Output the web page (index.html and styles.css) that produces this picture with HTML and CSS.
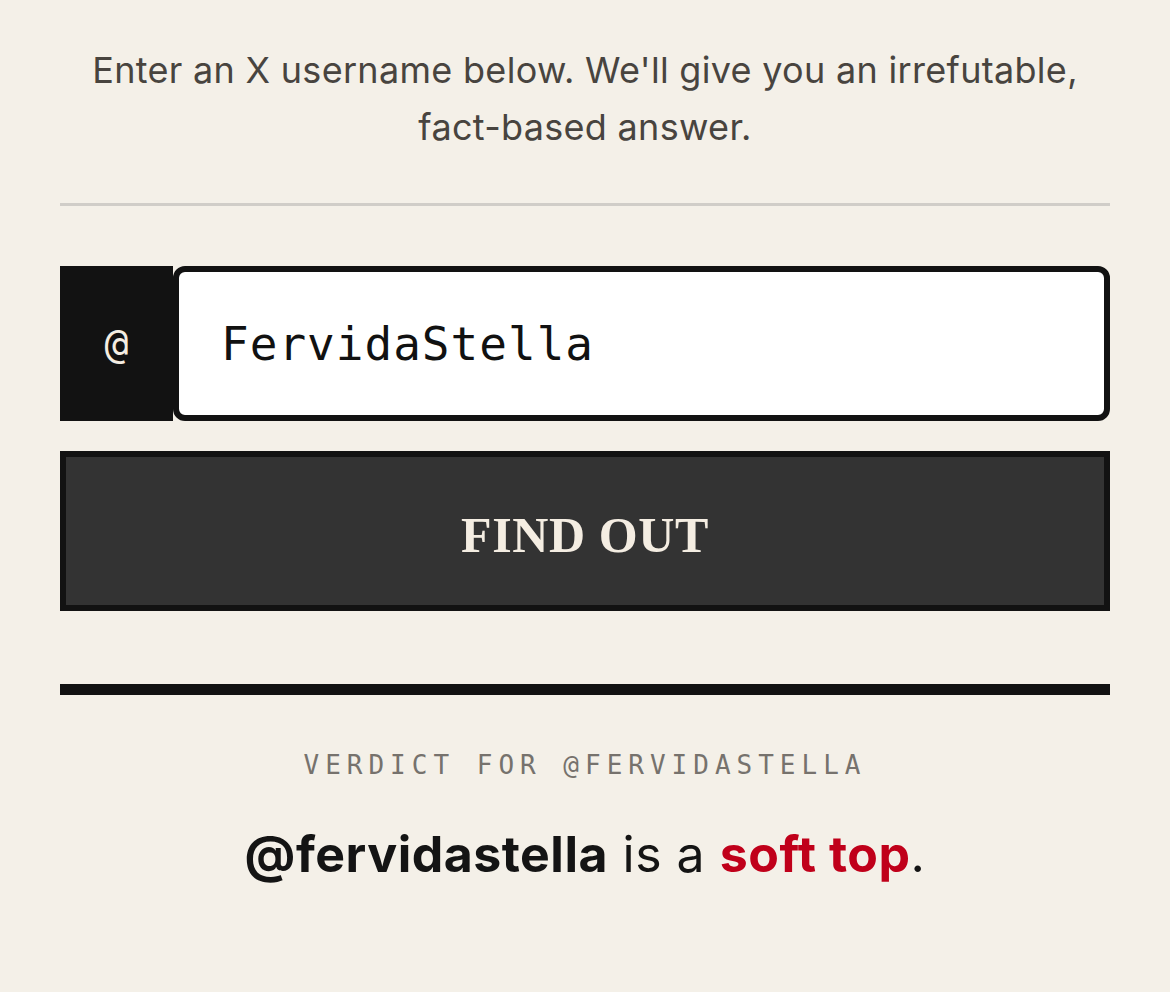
FILE: index.html
```html
<!DOCTYPE html>
<html>
<head>
<meta charset="utf-8">
<link rel="stylesheet" href="styles.css">
</head>
<body>
<main class="page">
  <p class="intro">Enter an X username below. We'll give you an irrefutable, <span class="nowrap">fact-based</span> answer.</p>
  <hr class="divider">
  <div class="input-row">
    <div class="prefix">@</div>
    <div class="field">FervidaStella</div>
  </div>
  <button class="btn">FIND OUT</button>
  <div class="rule"></div>
  <p class="label">VERDICT FOR @FERVIDASTELLA</p>
  <p class="result"><strong>@fervidastella</strong> is a <strong class="red">soft top</strong>.</p>
</main>
</body>
</html>
```
FILE: styles.css
```css
html, body {
  margin: 0;
  background: #f4f0e8;
}
.page {
  padding: 42px 60px 0;
  display: flex;
  flex-direction: column;
}
.intro {
  margin: 0;
  font-family: "Inter", "Noto Sans", sans-serif;
  font-size: 36px;
  letter-spacing: 0.3px;
  line-height: 57px;
  color: #48443f;
  text-align: center;
}
.nowrap {
  white-space: nowrap;
}
.divider {
  margin: 47px 0 0;
  border: 0;
  height: 3px;
  background: #d0cdc8;
}
.input-row {
  margin-top: 60px;
  display: flex;
  height: 155px;
}
.prefix {
  width: 113px;
  background: #121212;
  color: #f4ede2;
  font-family: "DejaVu Sans Mono", monospace;
  font-size: 40px;
  display: flex;
  align-items: center;
  justify-content: center;
}
.field {
  flex: 1;
  background: #fff;
  border: 6px solid #121212;
  border-radius: 12px;
  display: flex;
  align-items: center;
  padding-left: 42px;
  font-family: "DejaVu Sans Mono", monospace;
  font-size: 46px;
  letter-spacing: 1px;
  color: #111;
}
.btn {
  margin-top: 30px;
  height: 160px;
  background: #333;
  border: 6px solid #121212;
  color: #f4ede2;
  font-family: "Liberation Serif", serif;
  font-weight: 700;
  font-size: 50px;
  letter-spacing: 0.6px;
  padding: 7px 0 0;
}
.rule {
  margin-top: 73px;
  height: 11px;
  background: #121212;
}
.label {
  margin: 55px 0 0;
  text-align: center;
  font-family: "DejaVu Sans Mono", monospace;
  font-size: 26px;
  letter-spacing: 6px;
  color: #76726d;
  line-height: 30px;
}
.result {
  margin: 44px 0 0;
  text-align: center;
  font-family: "Inter", sans-serif;
  font-size: 50px;
  letter-spacing: 0.5px;
  color: #141414;
  line-height: 60px;
}
.result strong {
  font-weight: 700;
}
.red {
  color: #c0001a;
}
```
